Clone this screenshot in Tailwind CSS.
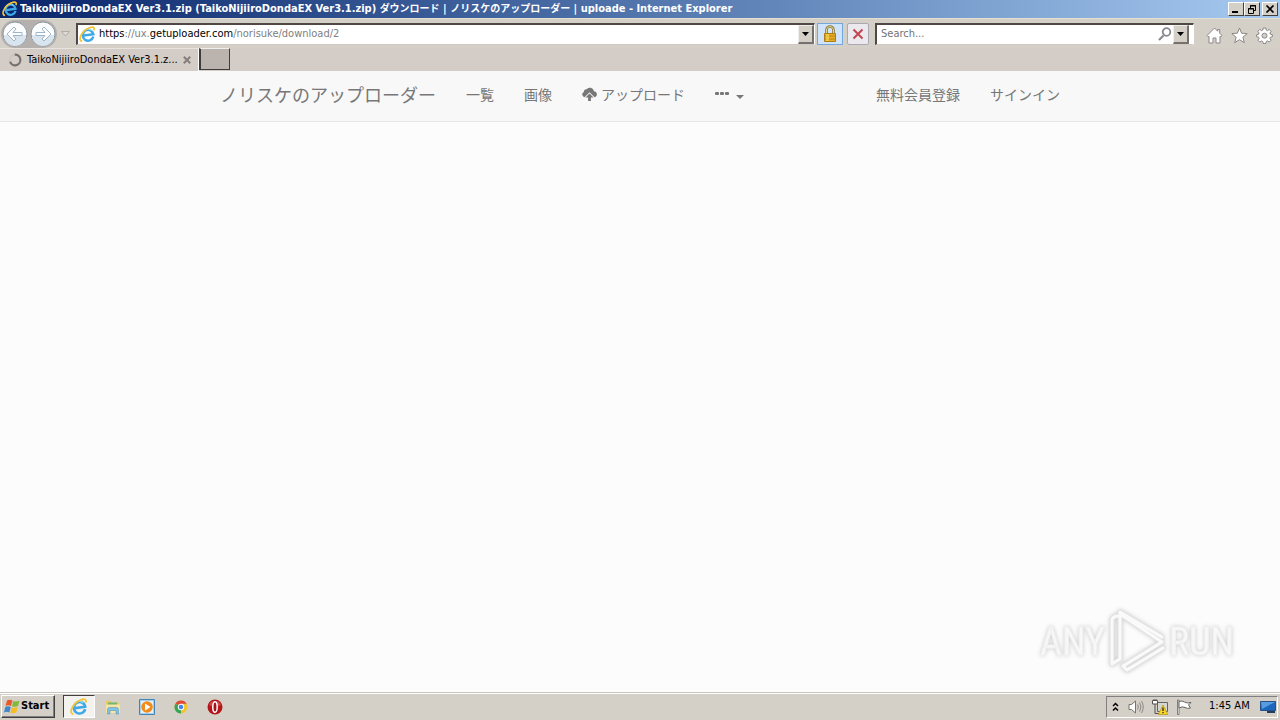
<!DOCTYPE html>
<html lang="ja">
<head>
    <meta charset="UTF-8">
    <meta name="viewport" content="width=device-width, initial-scale=1.0">
    <title>ノリスケのアップローダー</title>
    <script src="https://cdn.jsdelivr.net/npm/@tailwindcss/browser@4"></script>
</head>
<body class="flex h-screen flex-col overflow-hidden bg-[#d4d0c8] font-['DejaVu_Sans_Condensed','Noto_Sans_CJK_JP',sans-serif] text-[11px] text-black">

<!-- shared icons -->
<svg class="hidden">
    <defs>
        <symbol id="ie" viewBox="0 0 18 18">
            <g transform="rotate(-8 9 9)">
                <path d="M14.800 12A5.700 5.700 0 1 1 15.200 9.600H5" fill="none" stroke="#3fa9e8" stroke-width="2.600"/>
                <path d="M13.700 5.600A5.400 5.400 0 0 0 4.200 6.600" fill="none" stroke="#9be0fa" stroke-width="1"/>
            </g>
            <path d="M3.400 16.300C-1.500 15.500 2 6 10 2.300c4.500-2 7-1 5.600 2.400" fill="none" stroke="#f2c535" stroke-width="1.800"/>
        </symbol>
    </defs>
</svg>

<header class="shrink-0">
    <!-- title bar -->
    <div class="flex h-[18px] items-center bg-linear-to-r from-[#0a246a] to-[#a6caf0] px-[2px]">
        <svg class="size-4 shrink-0"><use href="#ie"/></svg>
        <h1 class="ml-[2px] flex-1 truncate font-bold leading-[18px] text-white">TaikoNijiiroDondaEX Ver3.1.zip (TaikoNijiiroDondaEX Ver3.1.zip) <span class="text-[10px]">ダウンロード</span> | <span class="text-[10px]">ノリスケのアップローダー</span> | uploade - Internet Explorer</h1>
        <div class="flex">
            <button aria-label="Minimize" class="flex h-[14px] w-4 items-center justify-center border border-t-white border-l-white border-r-[#404040] border-b-[#404040] bg-[#d4d0c8]">
                <svg class="h-2 w-2.5" viewBox="0 0 10 8"><path d="M1 6h6v2H1z"/></svg>
            </button>
            <button aria-label="Restore" class="flex h-[14px] w-4 items-center justify-center border border-t-white border-l-white border-r-[#404040] border-b-[#404040] bg-[#d4d0c8]">
                <svg class="h-[9px] w-2.5" viewBox="0 0 10 9"><path d="M3.500 3V.5h5v5H6.500M3 1h6M1.500 3.500h5v5h-5zM1 4h6" fill="none" stroke="#000"/></svg>
            </button>
            <button aria-label="Close" class="ml-[2px] flex h-[14px] w-4 items-center justify-center border border-t-white border-l-white border-r-[#404040] border-b-[#404040] bg-[#d4d0c8]">
                <svg class="h-2 w-2.5" viewBox="0 0 10 8"><path d="M1.500.5l7 7m0-7l-7 7" stroke="#000" stroke-width="1.700"/></svg>
            </button>
        </div>
    </div>

    <!-- address row -->
    <div class="flex h-[30px] items-center border-t border-[#e4e0d0]">
        <div class="ml-px flex rounded-full bg-[#b4b0ad] p-px">
            <button aria-label="Back" class="size-[26px]">
                <svg viewBox="0 0 26 26"><circle cx="13" cy="13" r="12" fill="#fbfcfd" stroke="#8f979f"/><path d="M2 14a11 11 0 0 0 22 0z" fill="#d8e4ee"/><path d="M12 6l-7 7 7 7 2-2-3-3.500h9v-3h-9L14 8z" fill="#fff" stroke="#9fb6ca"/></svg>
            </button>
            <button aria-label="Forward" class="ml-[2px] size-[26px]">
                <svg viewBox="0 0 26 26"><circle cx="13" cy="13" r="12" fill="#fbfcfd" stroke="#8f979f"/><path d="M2 14a11 11 0 0 0 22 0z" fill="#d8e4ee"/><path d="M14 6l7 7-7 7-2-2 3-3.500H6v-3h9L12 8z" fill="#fff" stroke="#9fb6ca"/></svg>
            </button>
        </div>
        <button aria-label="Recent pages" class="ml-[3px] h-4 w-3">
            <svg viewBox="0 0 12 16"><path d="M1.500 5.500h8L5.500 10z" fill="#dedad6" stroke="#b1aca8"/></svg>
        </button>
        <div class="ml-1 flex h-[22px] flex-1 items-center border-t-2 border-l-2 border-r border-b border-t-[#504844] border-l-[#504844] border-r-white border-b-[#d4c8c4] bg-white">
            <svg class="ml-px size-[17px]"><use href="#ie"/></svg>
            <a href="#" class="ml-[3px] flex-1 whitespace-nowrap text-[#808080]"><span class="text-black">https</span>://ux.<span class="text-black">getuploader.com</span>/norisuke/download/2</a>
            <button aria-label="Show addresses" class="flex h-[19px] w-4 items-center justify-center border-r-2 border-b-2 border-t border-l border-t-[#eee] border-l-[#eee] border-r-[#77716d] border-b-[#77716d] bg-[#d4d0c8]">
                <svg class="h-1 w-[7px]" viewBox="0 0 7 4"><path d="M0 0h7L3.500 4z"/></svg>
            </button>
        </div>
        <button aria-label="Security report" class="ml-[2px] flex h-[22px] w-[26px] items-center justify-center border border-[#76a7dc] bg-[#cfe4fb]">
            <svg class="h-[18px] w-4" viewBox="0 0 16 18"><path d="M4.500 9V5a3.500 3.500 0 0 1 7 0v4" fill="none" stroke="#8b7435" stroke-width="2.600"/><path d="M4.500 9V5a3.500 3.500 0 0 1 7 0v4" fill="none" stroke="#e8d590" stroke-width="1"/><path d="M2.500 8.500h11v8h-11z" fill="#e8b020" stroke="#ad7c12"/><path d="M3 11h10M3 14h10" stroke="#b87f10"/><path d="M4 9h3v7H4z" fill="#f8d35a" fill-opacity=".7"/></svg>
        </button>
        <button aria-label="Stop" class="ml-1 flex h-[22px] w-[22px] items-center justify-center rounded-xs border border-[#aaa9b3] bg-[#ebe8ee]">
            <svg class="size-3" viewBox="0 0 12 12"><path d="M1.500 1.500l9 9m0-9l-9 9" stroke="#c14650" stroke-width="2"/></svg>
        </button>
        <div class="ml-[6px] flex h-[22px] w-[319px] items-center border-t-2 border-l-2 border-r border-b border-t-[#504844] border-l-[#504844] border-r-white border-b-[#d4c8c4] bg-white">
            <input type="text" aria-label="Search" placeholder="Search..." class="min-w-0 flex-1 pl-1 outline-none placeholder:text-[#737373]">
            <button aria-label="Search" class="size-4">
                <svg viewBox="0 0 16 16"><circle cx="9.500" cy="6" r="3.800" fill="none" stroke="#888890" stroke-width="1.800"/><path d="M6.500 9.500L2 14" stroke="#888890" stroke-width="2.200"/></svg>
            </button>
            <button aria-label="Search providers" class="mr-1 flex h-[19px] w-4 items-center justify-center border-r-2 border-b-2 border-t border-l border-t-[#eee] border-l-[#eee] border-r-[#77716d] border-b-[#77716d] bg-[#d4d0c8]">
                <svg class="h-1 w-[7px]" viewBox="0 0 7 4"><path d="M0 0h7L3.500 4z"/></svg>
            </button>
        </div>
        <div class="mr-[7px] ml-3 flex gap-2 pt-1">
            <button aria-label="Home" class="size-[17px]">
                <svg viewBox="0 0 17 17"><path d="M8.500 1L1 8.500l1.300 1.300.7-.6V16h4v-5h3v5h4V9.200l.7.600L16 8.500l-2.300-2.300V2.500h-2v1.700z" fill="#fff" stroke="#8b8783"/></svg>
            </button>
            <button aria-label="Favorites" class="size-[17px]">
                <svg viewBox="0 0 17 17"><path d="M8.500 1l2.100 5.200 5.600.4-4.300 3.600 1.400 5.500-4.800-3-4.800 3 1.400-5.500L.8 6.600l5.600-.4z" fill="#fff" stroke="#8b8783"/></svg>
            </button>
            <button aria-label="Tools" class="size-[17px]">
                <svg viewBox="0 0 17 17"><path d="M7.200 1h2.600l.4 2 1.300.6 1.700-1.200 1.900 1.900-1.200 1.700.5 1.300 2 .4v2l-2 .5-.5 1.300 1.200 1.700-1.900 1.900-1.700-1.200-1.300.6-.4 2H7.200l-.4-2-1.300-.6-1.700 1.200-1.900-1.900 1.200-1.700-.5-1.300-2-.5v-2l2-.4.5-1.300-1.200-1.700 1.900-1.900 1.700 1.200L6.800 3z" fill="#fff" stroke="#8b8783"/><circle cx="8.500" cy="8.700" r="2.500" fill="#d4d0c8" stroke="#8b8783"/></svg>
            </button>
        </div>
    </div>

    <!-- tabs -->
    <div class="flex h-[23px] bg-[#d4ccc6]">
        <div class="flex w-[199px] items-center border-t border-r border-t-[#e8e3df] border-r-white pl-2">
            <svg class="size-[14px]" viewBox="0 0 14 14"><path d="M6.500 1.700A5.300 5.300 0 1 1 2 8.500" fill="none" stroke="#77716e" stroke-width="2.200"/><path d="M2 8.500A5.300 5.300 0 0 1 6.500 1.700" fill="none" stroke="#cdc6c0" stroke-width="2"/></svg>
            <span class="ml-[5px] w-[152px] whitespace-nowrap">TaikoNijiiroDondaEX Ver3.1.z...</span>
            <button aria-label="Close tab" class="ml-1 size-2">
                <svg viewBox="0 0 8 8"><path d="M.8.8l6.400 6.400m0-6.400L.8 7.200" stroke="#857f7b" stroke-width="2"/></svg>
            </button>
        </div>
        <button aria-label="New tab" class="h-[22px] w-[31px] border border-t-[#eee] border-l-2 border-l-[#403c3c] border-r-[#403c3c] border-b-[#403c3c] bg-[#bbb3ae]"></button>
    </div>
</header>

<!-- web page -->
<main class="relative flex-1 bg-[#fcfcfc] font-['Noto_Sans_CJK_JP',sans-serif] text-sm text-[#777]">
    <nav class="h-[51px] border-b border-[#e7e7e7] bg-[#f8f8f8]">
        <div class="mx-auto flex h-[46px] max-w-[840px] items-center whitespace-nowrap">
            <a href="#" class="text-lg">ノリスケのアップローダー</a>
            <a href="#" class="ml-[30px]">一覧</a>
            <a href="#" class="ml-[30px]">画像</a>
            <a href="#" class="ml-[30px] flex items-center">
                <svg class="mr-1 h-[14px] w-[15px]" viewBox="0 0 15 14" fill="#777"><path d="M2.500 10.300A2.900 2.900 0 0 1 1.800 4.900 2.800 2.800 0 0 1 4.500 2.200 4.300 4.300 0 0 1 12 4.200a3.100 3.100 0 0 1 .6 6.100L7.500 5.200z"/><path d="M7.500 6.600l4 4H8.900V14H6.100v-3.400H3.500z"/></svg>アップロード</a>
            <a href="#" aria-label="More" class="ml-[30px] flex items-center gap-[7px]">
                <svg class="h-[6px] w-[14px]" viewBox="0 0 14 6" fill="#777"><rect x="0" y="1" width="4" height="3" rx="1"/><rect x="5" y="1" width="4" height="3" rx="1"/><rect x="10" y="1" width="4" height="3" rx="1"/></svg>
                <svg class="mt-[6px] h-1 w-2" viewBox="0 0 8 4" fill="#777"><path d="M0 0h8L4 4z"/></svg>
            </a>
            <a href="#" class="ml-auto">無料会員登録</a>
            <a href="#" class="ml-[30px]">サインイン</a>
        </div>
    </nav>

    <!-- watermark -->
    <svg class="absolute right-10 bottom-[14px] h-[72px] w-[208px] drop-shadow-[0_0_2px_rgba(0,0,0,0.2)]" viewBox="0 0 208 72">
        <g fill="#f8f8f8" stroke="#f0f0f0" stroke-width="1" font-family="'Liberation Sans Narrow', 'Roboto Condensed', sans-serif" font-size="38">
            <text x="8" y="49">ANY</text>
            <text x="137" y="49">RUN</text>
        </g>
        <g fill="none" stroke-linejoin="round" stroke-linecap="round">
            <path d="M86 10q-6 0-6 5v43l8-5V6l42 25M88 51V8l42 28-39 24 4 4 36-22" stroke="#e2e2e2" stroke-width="5"/>
            <path d="M86 10q-6 0-6 5v43l8-5V6l42 25M88 51V8l42 28-39 24 4 4 36-22" stroke="#fafafa" stroke-width="3"/>
        </g>
    </svg>
</main>

<!-- taskbar -->
<footer class="flex h-7 shrink-0 items-center border-t border-[#c9c5bd] bg-[#d4d0c8] pl-px shadow-[inset_0_1px_0_#fff]">
    <button class="flex h-[23px] w-[54px] items-center border border-t-white border-l-white border-r-[#404040] border-b-[#404040] pl-[2px] font-bold shadow-[inset_-1px_-1px_0_#808080]">
        <svg class="mr-px size-4 shrink-0" viewBox="0 0 16 16"><path d="M3 1.500q2.500-1.500 5.500 0L7 7q-3-1.300-5.500 0z" fill="#e8592b"/><path d="M9.300 2q2.700 1.200 6.200-.5L14 7q-3 1.500-6 .2z" fill="#83b93b"/><path d="M1.300 8q2.700-1.300 5.500 0L5.300 13.500q-2.800-1.300-5.300 0z" fill="#3f86cd"/><path d="M7.800 8.300q2.700 1.200 6-.3L12.300 13.500q-3 1.500-6 .2z" fill="#f5bd28"/></svg>Start</button>
    <button aria-label="Internet Explorer" class="ml-2 flex h-[23px] w-8 items-center justify-center border border-t-[#404040] border-l-[#404040] border-r-white border-b-white bg-[#f4f2ef]">
        <svg class="size-[18px]"><use href="#ie"/></svg>
    </button>
    <button aria-label="Explorer" class="ml-[10px] size-4">
        <svg viewBox="0 0 16 16"><path d="M1 2h5l1 1.500h7V13H1z" fill="#e9c863"/><path d="M3 3.500h9v3H3z" fill="#73b573"/><path d="M1 5.500h14V14H1z" fill="#f6e5a1"/><path d="M2.500 15V10.500q0-2 2-2h7q2 0 2 2V15H11v-3.500H5V15z" fill="#7fc3e6" stroke="#5999bd" stroke-width=".6"/></svg>
    </button>
    <button aria-label="Media Player" class="ml-[18px] size-4">
        <svg viewBox="0 0 16 16"><path d="M.5.500h15v15H.5z" fill="#a4cfed" stroke="#4585b5"/><path d="M2 2h12v12H2z" fill="#e6f2fa"/><circle cx="8" cy="8" r="5.800" fill="#f18b1d"/><path d="M6 4.500v7L11.500 8z" fill="#fff"/></svg>
    </button>
    <button aria-label="Chrome" class="ml-[18px] size-4">
        <svg viewBox="0 0 16 16"><circle cx="8" cy="8" r="6.500" fill="#f3c52c"/><path d="M8 8L2.400 4.700A6.500 6.500 0 0 1 13.700 4.800H8z" fill="#df4939"/><path d="M2.400 4.700L8 8l0 6.500A6.500 6.500 0 0 1 2.400 4.700z" fill="#38a35b"/><circle cx="8" cy="8" r="3.200" fill="#fff"/><circle cx="8" cy="8" r="2.300" fill="#4686e8"/></svg>
    </button>
    <button aria-label="Opera" class="ml-[18px] size-4">
        <svg viewBox="0 0 16 16"><circle cx="8" cy="8" r="7.500" fill="#b3151b"/><path d="M2 6a6.500 6.500 0 0 1 12 0q-6 3-12 0z" fill="#dc6062" fill-opacity=".7"/><ellipse cx="8" cy="8" rx="2.200" ry="5.300" fill="#a41319" stroke="#fff" stroke-width="1.500"/></svg>
    </button>

    <div class="mr-[2px] ml-auto flex h-[22px] w-[172px] items-center border border-t-[#808080] border-l-[#808080] border-r-white border-b-white pl-[5px]">
        <button aria-label="Show hidden icons" class="h-[10px] w-[7px]">
            <svg viewBox="0 0 7 10"><path d="M1 4l2.500-2.500L6 4M1 8.500L3.500 6 6 8.500" fill="none" stroke="#000" stroke-width="1.500"/></svg>
        </button>
        <button aria-label="Volume" class="ml-[9px] size-4">
            <svg viewBox="0 0 16 16"><path d="M1 5.500h2.500L7.500 2v12L3.500 10.500H1z" fill="#fff" stroke="#77736f"/><path d="M9.500 5.500q1.800 2.500 0 5M11.500 3.500q3 4.500 0 9M13.500 2q3.500 6 0 12" fill="none" stroke="#8c8884"/></svg>
        </button>
        <button aria-label="Network" class="ml-2 size-4">
            <svg viewBox="0 0 16 16"><path d="M5.500 3.500h10v9h-10z" fill="#d5d5d1" stroke="#66625f"/><path d="M.5 1.500h5V5h-5z" fill="#fff" stroke="#55514e"/><path d="M2 0v2m2-2v2M3 5v9.500h5" fill="none" stroke="#55514e"/><path d="M11 6l4.700 9.500H6.300z" fill="#ffd728" stroke="#b69610" stroke-width=".7"/><path d="M11 8.500V12m0 1v1.300" stroke="#222" stroke-width="1.300"/></svg>
        </button>
        <button aria-label="Action Center" class="ml-2 size-4">
            <svg viewBox="0 0 16 16"><path d="M1.500 1v14.500h1.500V1z" fill="#fff" stroke="#66625f" stroke-width=".8"/><path d="M3 2.500q3-1.200 5.500.5t6.500.500L12.500 6l2 3q-3 1-5.500-.5T3 9z" fill="#fff" stroke="#66625f"/></svg>
        </button>
        <time class="ml-[17px] whitespace-nowrap">1:45 AM</time>
        <button aria-label="Show desktop" class="mr-px ml-auto size-4">
            <svg viewBox="0 0 16 16"><path d="M.5 2.500h15v9H.5z" fill="#1c66bd" stroke="#28518a"/><path d="M1 3h14L2 10z" fill="#579ee0"/><path d="M7 12h8v2H7z" fill="#253c5b"/></svg>
        </button>
    </div>
</footer>
</body>
</html>
